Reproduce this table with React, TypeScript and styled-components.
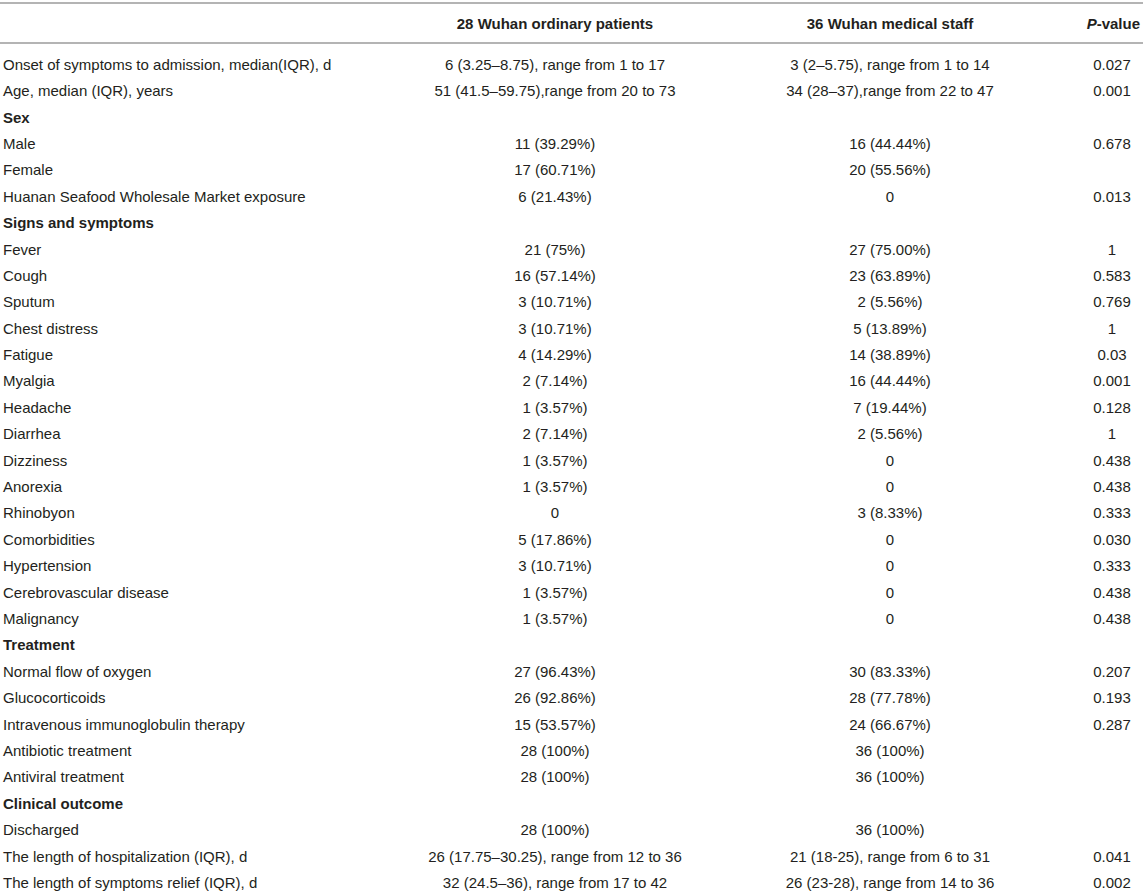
import styled, { createGlobalStyle } from "styled-components";

const GlobalStyle = createGlobalStyle`
    html, body {
        margin: 0;
        padding: 0;
        background: #ffffff;
    }
    body {
        font-family: "Liberation Sans", Arial, sans-serif;
        color: #231f20;
    }
`;

const Table = styled.table`
    width: 1143px;
    margin-top: 2px;
    border-collapse: collapse;
    table-layout: fixed;
    font-size: 15px;
`;

const HeadCell = styled.th<{ align?: string }>`
    height: 38px;
    padding: 0 3px;
    border-top: 2px solid #b4b4b4;
    border-bottom: 2px solid #b4b4b4;
    font-weight: 700;
    text-align: ${(props) => props.align || "center"};
    white-space: nowrap;
`;

const Row = styled.tr`
    height: 26.4px;
    &:first-child td {
        padding-top: 8px;
    }
`;

const Cell = styled.td<{ align?: string; bold?: boolean }>`
    padding: 0 3px;
    line-height: 26px;
    text-align: ${(props) => props.align || "center"};
    font-weight: ${(props) => (props.bold ? 700 : 400)};
    white-space: nowrap;
    vertical-align: middle;
`;

type Item = {
    label: string;
    a?: string;
    b?: string;
    p?: string;
    section?: boolean;
};

const rows: Item[] = [
    {
        label: "Onset of symptoms to admission, median(IQR), d",
        a: "6 (3.25–8.75), range from 1 to 17",
        b: "3 (2–5.75), range from 1 to 14",
        p: "0.027",
    },
    {
        label: "Age, median (IQR), years",
        a: "51 (41.5–59.75),range from 20 to 73",
        b: "34 (28–37),range from 22 to 47",
        p: "0.001",
    },
    { label: "Sex", section: true },
    { label: "Male", a: "11 (39.29%)", b: "16 (44.44%)", p: "0.678" },
    { label: "Female", a: "17 (60.71%)", b: "20 (55.56%)" },
    {
        label: "Huanan Seafood Wholesale Market exposure",
        a: "6 (21.43%)",
        b: "0",
        p: "0.013",
    },
    { label: "Signs and symptoms", section: true },
    { label: "Fever", a: "21 (75%)", b: "27 (75.00%)", p: "1" },
    { label: "Cough", a: "16 (57.14%)", b: "23 (63.89%)", p: "0.583" },
    { label: "Sputum", a: "3 (10.71%)", b: "2 (5.56%)", p: "0.769" },
    { label: "Chest distress", a: "3 (10.71%)", b: "5 (13.89%)", p: "1" },
    { label: "Fatigue", a: "4 (14.29%)", b: "14 (38.89%)", p: "0.03" },
    { label: "Myalgia", a: "2 (7.14%)", b: "16 (44.44%)", p: "0.001" },
    { label: "Headache", a: "1 (3.57%)", b: "7 (19.44%)", p: "0.128" },
    { label: "Diarrhea", a: "2 (7.14%)", b: "2 (5.56%)", p: "1" },
    { label: "Dizziness", a: "1 (3.57%)", b: "0", p: "0.438" },
    { label: "Anorexia", a: "1 (3.57%)", b: "0", p: "0.438" },
    { label: "Rhinobyon", a: "0", b: "3 (8.33%)", p: "0.333" },
    { label: "Comorbidities", a: "5 (17.86%)", b: "0", p: "0.030" },
    { label: "Hypertension", a: "3 (10.71%)", b: "0", p: "0.333" },
    { label: "Cerebrovascular disease", a: "1 (3.57%)", b: "0", p: "0.438" },
    { label: "Malignancy", a: "1 (3.57%)", b: "0", p: "0.438" },
    { label: "Treatment", section: true },
    { label: "Normal flow of oxygen", a: "27 (96.43%)", b: "30 (83.33%)", p: "0.207" },
    { label: "Glucocorticoids", a: "26 (92.86%)", b: "28 (77.78%)", p: "0.193" },
    {
        label: "Intravenous immunoglobulin therapy",
        a: "15 (53.57%)",
        b: "24 (66.67%)",
        p: "0.287",
    },
    { label: "Antibiotic treatment", a: "28 (100%)", b: "36 (100%)" },
    { label: "Antiviral treatment", a: "28 (100%)", b: "36 (100%)" },
    { label: "Clinical outcome", section: true },
    { label: "Discharged", a: "28 (100%)", b: "36 (100%)" },
    {
        label: "The length of hospitalization (IQR), d",
        a: "26 (17.75–30.25), range from 12 to 36",
        b: "21 (18-25), range from 6 to 31",
        p: "0.041",
    },
    {
        label: "The length of symptoms relief (IQR), d",
        a: "32 (24.5–36), range from 17 to 42",
        b: "26 (23-28), range from 14 to 36",
        p: "0.002",
    },
];

const App = () => {
    return (
        <>
            <GlobalStyle />
            <Table>
                <colgroup>
                    <col style={{ width: 411 }} />
                    <col style={{ width: 288 }} />
                    <col style={{ width: 382 }} />
                    <col style={{ width: 62 }} />
                </colgroup>
                <thead>
                    <tr>
                        <HeadCell align="left" />
                        <HeadCell>28 Wuhan ordinary patients</HeadCell>
                        <HeadCell>36 Wuhan medical staff</HeadCell>
                        <HeadCell align="right">
                            <i>P</i>-value
                        </HeadCell>
                    </tr>
                </thead>
                <tbody>
                    {rows.map((row) => (
                        <Row key={row.label}>
                            <Cell align="left" bold={row.section}>
                                {row.label}
                            </Cell>
                            <Cell>{row.a}</Cell>
                            <Cell>{row.b}</Cell>
                            <Cell>{row.p}</Cell>
                        </Row>
                    ))}
                </tbody>
            </Table>
        </>
    );
};

export default App;
